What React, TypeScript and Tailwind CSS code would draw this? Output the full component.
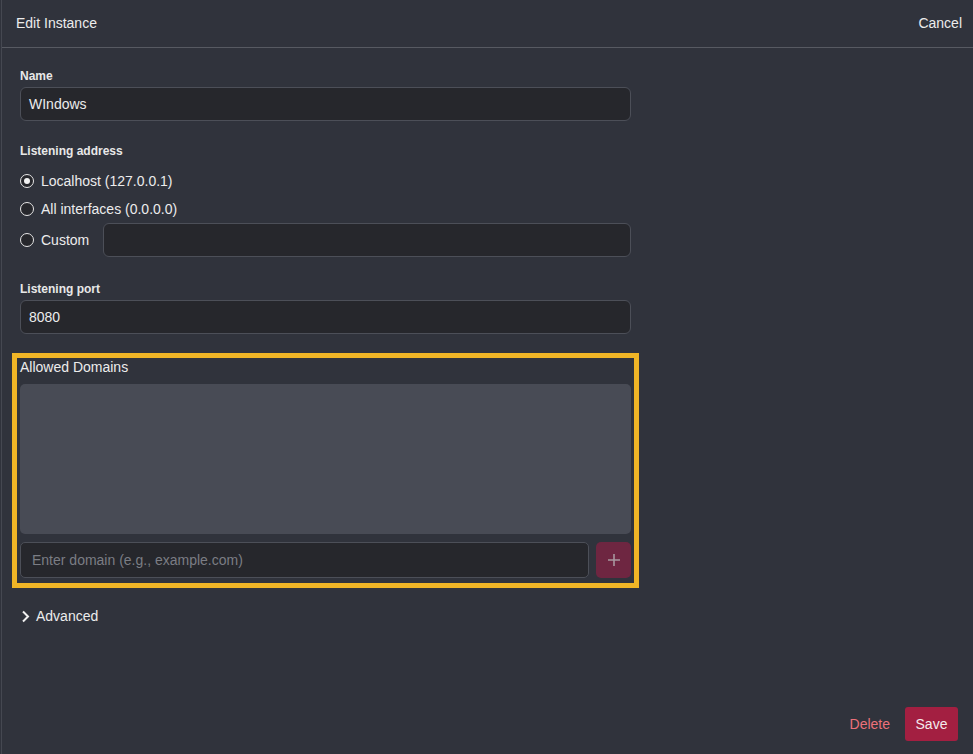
import React from "react";

function Radio({ checked }: { checked?: boolean }) {
  return (
    <span className="flex h-[14px] w-[14px] items-center justify-center rounded-full border border-[#e6e6e6] bg-[#26272c]">
      {checked && <span className="h-[6px] w-[6px] rounded-full bg-[#f2f2f2]" />}
    </span>
  );
}

export default function App() {
  return (
    <div
      className="h-[754px] w-full bg-[#30333c] pl-px text-[#ececec]"
      style={{ fontFamily: '"Liberation Sans", Arial, sans-serif' }}
    >
      <div className="flex h-full flex-col border-l border-[#454851]">
        <div className="flex h-[48px] items-center justify-between border-b border-[#575a62] pl-[14px] pr-[11px]">
          <span className="text-[14px]">Edit Instance</span>
          <span className="text-[14px]">Cancel</span>
        </div>

        <div className="flex flex-col px-[18px] pt-[20px]">
          <div className="w-[611px]">
            <label className="block text-[12px] font-bold leading-[16px] text-[#e8e8e8]">Name</label>
            <div className="mt-[3px] flex h-[34px] items-center rounded-[6px] border border-[#4c4f58] bg-[#26272c] px-[8px] text-[14px]">
              WIndows
            </div>

            <label className="mt-[22px] block text-[12px] font-bold leading-[16px] text-[#e8e8e8]">
              Listening address
            </label>
            <div className="mt-[8px] flex flex-col">
              <div className="flex h-[28px] items-center gap-[7px]">
                <Radio checked />
                <span className="text-[14px]">Localhost (127.0.0.1)</span>
              </div>
              <div className="flex h-[28px] items-center gap-[7px]">
                <Radio />
                <span className="text-[14px]">All interfaces (0.0.0.0)</span>
              </div>
              <div className="flex h-[34px] items-center">
                <Radio />
                <span className="ml-[7px] text-[14px]">Custom</span>
                <div className="ml-[14px] h-[34px] flex-1 rounded-[6px] border border-[#4c4f58] bg-[#26272c]" />
              </div>
            </div>

            <label className="mt-[24px] block text-[12px] font-bold leading-[16px] text-[#e8e8e8]">
              Listening port
            </label>
            <div className="mt-[3px] flex h-[34px] items-center rounded-[6px] border border-[#4c4f58] bg-[#26272c] px-[8px] text-[14px]">
              8080
            </div>
          </div>

          <div className="-mx-[8px] mt-[19px] w-[627px] border-[5px] border-[#f0b526] px-[3px] pb-[5px]">
            <div className="text-[14px] leading-[18px]">Allowed Domains</div>
            <div className="mt-[8px] h-[150px] rounded-[5px] bg-[#484b55]" />
            <div className="mt-[8px] flex gap-[7px]">
              <div className="flex h-[36px] flex-1 items-center rounded-[5px] border border-[#4c4f58] bg-[#26272c] px-[11px] text-[14px] text-[#7b7d84]">
                Enter domain (e.g., example.com)
              </div>
              <div className="flex h-[36px] w-[35px] items-center justify-center rounded-[5px] bg-[#6e2641]">
                <svg width="12" height="12" viewBox="0 0 12 12">
                  <path d="M6 0v12M0 6h12" stroke="#a8989f" strokeWidth="1.6" />
                </svg>
              </div>
            </div>
          </div>

          <div className="mt-[18px] flex items-center gap-[6px] pl-[1px]">
            <svg width="9" height="13" viewBox="0 0 9 13">
              <path d="M2 1.5l5 5-5 5" fill="none" stroke="#f0f0f0" strokeWidth="2" />
            </svg>
            <span className="text-[14px]">Advanced</span>
          </div>
        </div>

        <div className="mt-auto flex items-center justify-end gap-[15px] pb-[13px] pr-[15px]">
          <span className="text-[14px] text-[#ec717a]">Delete</span>
          <button className="flex h-[34px] w-[53px] items-center justify-center rounded-[3px] bg-[#a31f41] text-[14px] text-[#f3e9ec]">
            Save
          </button>
        </div>
      </div>
    </div>
  );
}
